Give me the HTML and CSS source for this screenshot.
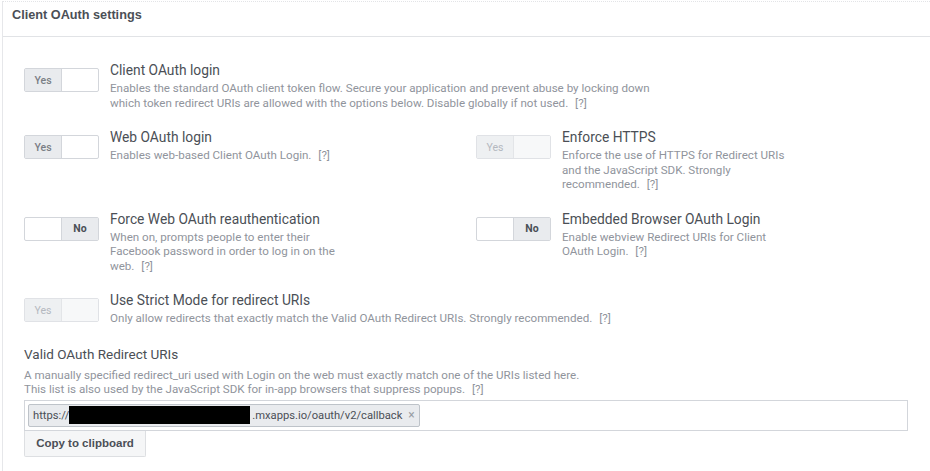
FILE: index.html
```html
<!DOCTYPE html>
<html>
<head>
<meta charset="utf-8">
<link rel="stylesheet" href="styles.css">
</head>
<body>
<div class="panel">
  <div class="panel-header">Client OAuth settings</div>
  <div class="panel-body">
    <div class="settings">
      <div class="setting full">
        <div class="toggle on"><span class="half yes">Yes</span><span class="half blank"></span></div>
        <div class="text">
          <div class="title">Client OAuth login</div>
          <div class="desc">Enables the standard OAuth client token flow. Secure your application and prevent abuse by locking down<br>which token redirect URIs are allowed with the options below. Disable globally if not used. <span class="help">[?]</span></div>
        </div>
      </div>
      <div class="setting">
        <div class="toggle on"><span class="half yes">Yes</span><span class="half blank"></span></div>
        <div class="text">
          <div class="title">Web OAuth login</div>
          <div class="desc">Enables web-based Client OAuth Login. <span class="help">[?]</span></div>
        </div>
      </div>
      <div class="setting">
        <div class="toggle on disabled"><span class="half yes">Yes</span><span class="half blank"></span></div>
        <div class="text">
          <div class="title">Enforce HTTPS</div>
          <div class="desc">Enforce the use of HTTPS for Redirect URIs<br>and the JavaScript SDK. Strongly<br>recommended. <span class="help">[?]</span></div>
        </div>
      </div>
      <div class="setting">
        <div class="toggle off"><span class="half blank"></span><span class="half no">No</span></div>
        <div class="text">
          <div class="title">Force Web OAuth reauthentication</div>
          <div class="desc">When on, prompts people to enter their<br>Facebook password in order to log in on the<br>web. <span class="help">[?]</span></div>
        </div>
      </div>
      <div class="setting">
        <div class="toggle off"><span class="half blank"></span><span class="half no">No</span></div>
        <div class="text">
          <div class="title">Embedded Browser OAuth Login</div>
          <div class="desc">Enable webview Redirect URIs for Client<br>OAuth Login. <span class="help">[?]</span></div>
        </div>
      </div>
      <div class="setting full">
        <div class="toggle on disabled"><span class="half yes">Yes</span><span class="half blank"></span></div>
        <div class="text">
          <div class="title">Use Strict Mode for redirect URIs</div>
          <div class="desc">Only allow redirects that exactly match the Valid OAuth Redirect URIs. Strongly recommended. <span class="help">[?]</span></div>
        </div>
      </div>
    </div>

    <div class="uris">
      <div class="title">Valid OAuth Redirect URIs</div>
      <div class="desc narrow">A manually specified redirect_uri used with Login on the web must exactly match one of the URIs listed here.<br>This list is also used by the JavaScript SDK for in-app browsers that suppress popups. <span class="help">[?]</span></div>
      <div class="token-input">
        <span class="token">https://<span class="redacted"></span>.mxapps.io/oauth/v2/callback<span class="remove">×</span></span>
      </div>
      <button class="copy-btn">Copy to clipboard</button>
    </div>
  </div>
</div>
</body>
</html>
```

FILE: styles.css
```css
html, body {
  margin: 0;
  padding: 0;
  background: #ffffff;
  overflow: hidden;
}

body {
  font-family: Roboto, "Liberation Sans", Arial, sans-serif;
  color: #4b4f56;
}

.panel {
  margin: 1px 0 0 2px;
  border-top: 1px dotted #e3e4e7;
  border-left: 1px solid #e6e7ea;
  min-height: 480px;
}

.panel-header {
  border-bottom: 1px solid #e1e3e6;
  padding: 5px 0 0 9px;
  box-sizing: border-box;
  height: 35px;
  font-family: "Liberation Sans", Arial, sans-serif;
  font-weight: bold;
  font-size: 12.7px;
  line-height: 16px;
  color: #4b4f56;
}

.panel-body {
  padding: 24px 0 0 21px;
}

.settings {
  display: grid;
  grid-template-columns: 452px 452px;
  row-gap: 18px;
}

.setting {
  display: flex;
  gap: 11px;
  align-items: flex-start;
}

.setting.full {
  grid-column: 1 / span 2;
}

.toggle {
  flex: none;
  display: flex;
  width: 75px;
  height: 24px;
  margin-top: 7px;
  box-sizing: border-box;
  border: 1px solid #d3d6db;
  border-radius: 2px;
  background: #ffffff;
}

.half {
  flex: 1;
  display: flex;
  align-items: center;
  justify-content: center;
  font-size: 10.5px;
  font-weight: 500;
  color: #7a7e85;
}

.half.yes {
  background: #e9ebee;
  border-right: 1px solid #d3d6db;
}

.half.no {
  background: #e9ebee;
  border-left: 1px solid #d3d6db;
  font-weight: bold;
  color: #4b4f56;
}

.toggle.disabled {
  border-color: #e0e2e6;
}

.toggle.disabled .half.yes {
  background: #eef0f2;
  color: #b4b8bf;
  font-weight: normal;
  border-right-color: #e3e5e8;
}

.toggle.disabled .half.blank {
  background: #f7f8f9;
}

.title {
  font-size: 13.8px;
  line-height: 18px;
  color: #4b4f56;
}

.desc {
  margin-top: 2px;
  font-size: 11.6px;
  line-height: 14.5px;
  color: #90949c;
  white-space: nowrap;
}

.help {
  margin-left: 4px;
}

.uris {
  margin-top: 19px;
  padding-right: 21px;
}

.uris .title {
  font-size: 13.5px;
}

.uris .desc.narrow {
  margin-top: 5px;
  line-height: 14px;
}

.token-input {
  margin-top: 4px;
  width: 884px;
  height: 31px;
  box-sizing: border-box;
  border: 1px solid #d3d6db;
  padding: 3px 3px;
  display: flex;
  align-items: center;
}

.token {
  display: inline-flex;
  align-items: center;
  height: 23px;
  box-sizing: border-box;
  padding: 0 4px 0 4px;
  background: #e9ebee;
  border: 1px solid #bec3c9;
  border-radius: 2px;
  font-size: 11.2px;
  color: #4b4f56;
}

.redacted {
  display: inline-block;
  width: 181px;
  height: 18px;
  background: #000000;
  margin: 0 2px 0 0;
}

.remove {
  margin-left: 6px;
  color: #9a9ea5;
  font-size: 12px;
}

.copy-btn {
  display: block;
  width: 122px;
  height: 26px;
  margin: 0;
  padding: 0;
  box-sizing: border-box;
  border: 1px solid #dddfe2;
  border-top: none;
  background: #f5f6f7;
  font-family: "Liberation Sans", Arial, sans-serif;
  font-weight: bold;
  font-size: 11.5px;
  color: #4b4f56;
  border-radius: 0 0 2px 2px;
}
```
